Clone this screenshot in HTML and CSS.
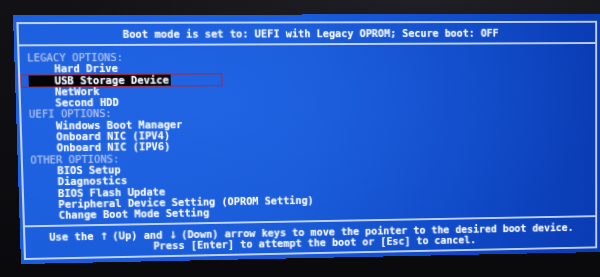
FILE: index.html
```html
<!DOCTYPE html>
<html lang="en">
<head>
<meta charset="utf-8">
<title>Boot Menu</title>
<link rel="stylesheet" href="styles.css">
</head>
<body>
<div class="screen">
  <div class="panel">
    <div class="frame">
      <div class="header">Boot mode is set to: UEFI with Legacy OPROM; Secure boot: OFF</div>
      <div class="menu">
        <div class="group">LEGACY OPTIONS:</div>
        <div class="item">Hard Drive</div>
        <div class="item selected"><span class="bar">USB Storage Device</span></div>
        <div class="item">NetWork</div>
        <div class="item">Second HDD</div>
        <div class="group">UEFI OPTIONS:</div>
        <div class="item">Windows Boot Manager</div>
        <div class="item">Onboard NIC (IPV4)</div>
        <div class="item">Onboard NIC (IPV6)</div>
        <div class="group">OTHER OPTIONS:</div>
        <div class="item">BIOS Setup</div>
        <div class="item">Diagnostics</div>
        <div class="item">BIOS Flash Update</div>
        <div class="item">Peripheral Device Setting (OPROM Setting)</div>
        <div class="item">Change Boot Mode Setting</div>
      </div>
      <div class="footer">
        <p>Use the <span class="arr">↑</span> (Up) and <span class="arr">↓</span> (Down) arrow keys to move the pointer to the desired boot device.</p>
        <p>Press [Enter] to attempt the boot or [Esc] to cancel.</p>
      </div>
    </div>
  </div>
</div>
</body>
</html>
```
FILE: styles.css
```css
html, body {
  margin: 0;
  padding: 0;
}

body {
  width: 600px;
  height: 277px;
  overflow: hidden;
  background: #0b0b0e;
}

.screen {
  width: 600px;
  height: 277px;
  box-sizing: border-box;
  padding: 15px 0 0 13px;
  background:
    radial-gradient(ellipse 60% 20% at 70% 0%, rgba(40, 40, 48, 0.6), rgba(0, 0, 0, 0) 100%),
    linear-gradient(180deg, #121216 0%, #0a0a0d 100%);
}

.panel {
  width: 587px;
  height: 249px;
  box-sizing: border-box;
  padding: 6.5px 3px 4.5px 3px;
  transform-origin: 0 0;
  transform: matrix3d(1.046915, -0.0017835, 0, 0.00007992,
                      0.032572, 1.013817, 0, 0.00005549,
                      0, 0, 1, 0,
                      0, 0, 0, 1);
  background:
    radial-gradient(ellipse 70% 80% at 30% 35%, rgba(40, 110, 240, 0.55), rgba(40, 110, 240, 0) 100%),
    linear-gradient(90deg, #1a5ddb 0%, #1657d3 45%, #0f48c4 75%, #0a3cb4 100%);
  font-family: "DejaVu Sans Mono", "Liberation Mono", monospace;
  font-size: 10.25px;
  font-weight: bold;
  color: #f3f6ff;
  text-shadow: 0 0 1.5px rgba(210, 225, 255, 0.55);
}

.frame {
  height: 100%;
  box-sizing: border-box;
  border: 2px solid rgba(220, 230, 255, 0.85);
  display: flex;
  flex-direction: column;
}

.header {
  height: 20.5px;
  line-height: 21px;
  text-align: center;
  white-space: nowrap;
  border-bottom: 2px solid rgba(220, 230, 255, 0.85);
}

.menu {
  flex: 1;
  padding-top: 6px;
  line-height: 11.3px;
}

.group,
.item {
  white-space: nowrap;
}

.group {
  padding-left: 7.3px;
  color: #a9bce8;
  font-weight: normal;
}

.item {
  padding-left: 33px;
}

.item.selected {
  width: 195px;
  margin-left: 1px;
  padding-left: 7.4px;
  box-sizing: border-box;
  outline: 1.3px solid #a8283c;
}

.bar {
  display: inline-block;
  background: #050508;
  padding: 0 2px 0 24.6px;
}

.footer {
  border-top: 2px solid rgba(220, 230, 255, 0.85);
  padding: 5px 0 3.5px;
  line-height: 10.8px;
  text-align: center;
}

.footer p {
  margin: 0;
  white-space: nowrap;
}

.arr {
  display: inline-block;
  width: 6.17px;
  text-align: center;
  font-family: "DejaVu Sans", sans-serif;
  font-size: 10px;
  font-weight: bold;
  line-height: 1;
}
```
